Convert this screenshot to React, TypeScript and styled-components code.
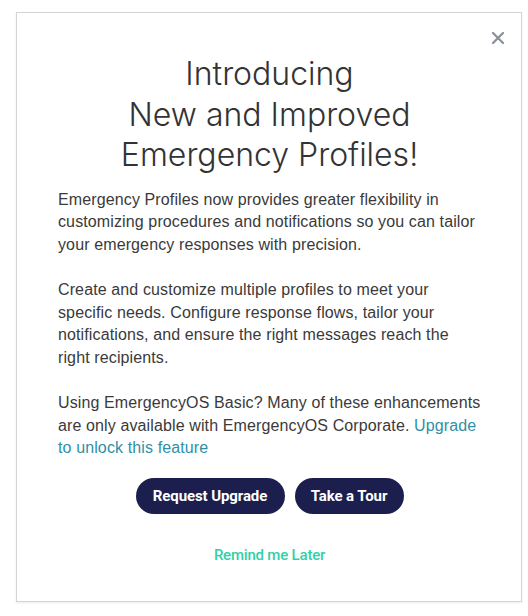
import React from "react";
import styled, { createGlobalStyle } from "styled-components";

const Global = createGlobalStyle`
  html, body { margin: 0; padding: 0; background: #ffffff; }
  body { font-family: "Liberation Sans", Arial, sans-serif; }
  * { box-sizing: border-box; }
`;

const Page = styled.div`
  padding: 12px 0 0 16px;
  width: 528px;
  height: 616px;
`;

const Card = styled.div`
  position: relative;
  width: 506px;
  height: 590px;
  border: 1px solid #d4d4d4;
  box-shadow: 0 1px 2px rgba(0, 0, 0, 0.08);
  background: #fff;
  padding: 41px 40px 0 41px;
  display: flex;
  flex-direction: column;
`;

const Close = styled.button`
  position: absolute;
  top: 15px;
  right: 13px;
  width: 20px;
  height: 20px;
  padding: 0;
  border: none;
  background: transparent;
  display: flex;
  align-items: center;
  justify-content: center;
  cursor: pointer;
`;

const Title = styled.h1`
  margin: 0;
  font-family: Inter, "Open Sans", sans-serif;
  font-weight: 300;
  font-size: 32px;
  line-height: 40.5px;
  color: #333333;
  text-align: center;
`;

const Body = styled.div`
  margin-top: 13px;
  display: flex;
  flex-direction: column;
  gap: 23px;
`;

const Para = styled.p`
  margin: 0;
  font-family: "Liberation Sans", Arial, sans-serif;
  font-size: 16px;
  letter-spacing: 0.12px;
  line-height: 22.5px;
  color: #3a3a3a;
`;

const Link = styled.a`
  color: #2f8fa6;
  text-decoration: none;
`;

const Actions = styled.div`
  margin-top: 18px;
  display: flex;
  justify-content: center;
  gap: 10px;
`;

const Pill = styled.button<{ $w: number }>`
  width: ${(p) => p.$w}px;
  height: 36px;
  border: none;
  border-radius: 18px;
  background: #1c1f4d;
  color: #ffffff;
  font-family: Roboto, "Liberation Sans", sans-serif;
  font-weight: 700;
  font-size: 15px;
  letter-spacing: -0.1px;
  padding: 0;
  cursor: pointer;
`;

const Later = styled.button`
  margin: 31px auto 0;
  border: none;
  background: transparent;
  padding: 0;
  font-family: Roboto, "Liberation Sans", sans-serif;
  font-weight: 500;
  font-size: 15px;
  line-height: 20px;
  letter-spacing: -0.2px;
  color: #2fd1a8;
  cursor: pointer;
`;

export default function App() {
  return (
    <>
      <Global />
      <Page>
        <Card>
          <Close aria-label="Close">
            <svg width="12" height="12" viewBox="0 0 12 12">
              <path
                d="M1 1 L11 11 M11 1 L1 11"
                stroke="#8a8f98"
                strokeWidth="2.2"
                strokeLinecap="square"
              />
            </svg>
          </Close>
          <Title>
            Introducing
            <br />
            New and Improved
            <br />
            Emergency Profiles!
          </Title>
          <Body>
            <Para>
              Emergency Profiles now provides greater flexibility in customizing
              procedures and notifications so you can tailor your emergency
              responses with precision.
            </Para>
            <Para>
              Create and customize multiple profiles to meet your specific needs.
              Configure response flows, tailor your notifications, and ensure the
              right messages reach the right recipients.
            </Para>
            <Para>
              Using EmergencyOS Basic? Many of these enhancements are only
              available with EmergencyOS Corporate.{" "}
              <Link href="#">Upgrade to unlock this feature</Link>
            </Para>
          </Body>
          <Actions>
            <Pill $w={149}>Request Upgrade</Pill>
            <Pill $w={109}>Take a Tour</Pill>
          </Actions>
          <Later>Remind me Later</Later>
        </Card>
      </Page>
    </>
  );
}
